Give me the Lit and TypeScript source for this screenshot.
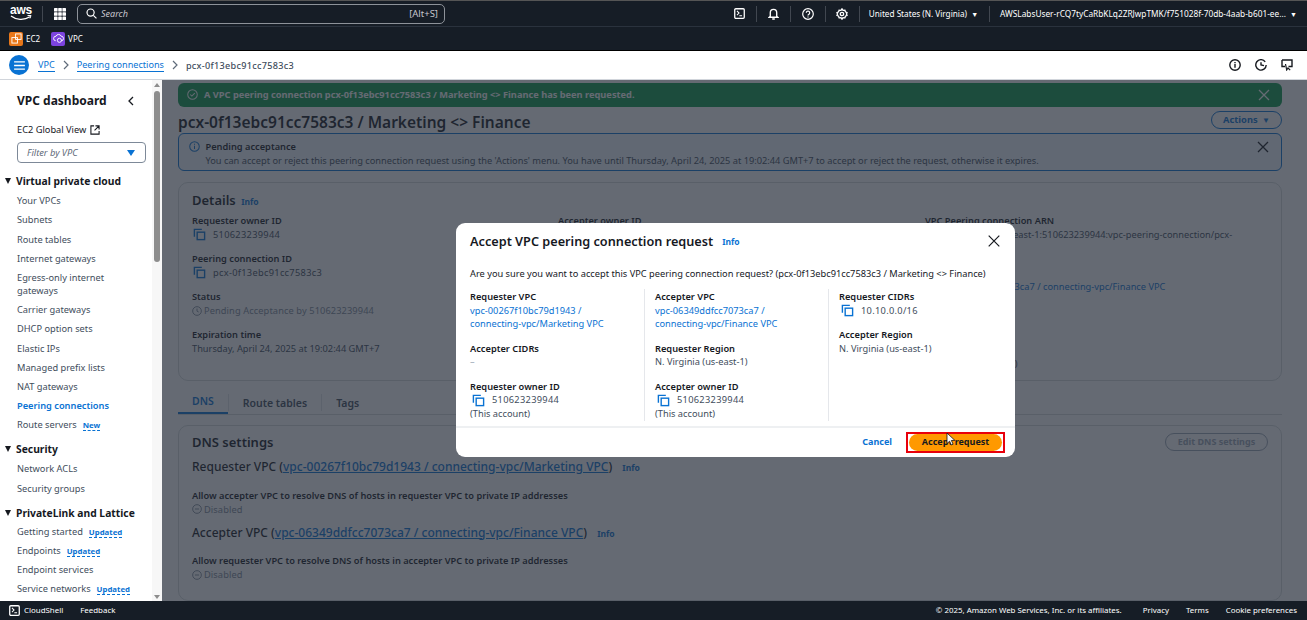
import { LitElement, css, html, svg } from "lit";
import { customElement } from "lit/decorators.js";

type NavItem = { label: string; badge?: string; active?: boolean };
type NavSection = { title: string; items: NavItem[] };

const NAV: NavSection[] = [
  {
    title: "Virtual private cloud",
    items: [
      { label: "Your VPCs" },
      { label: "Subnets" },
      { label: "Route tables" },
      { label: "Internet gateways" },
      { label: "Egress-only internet gateways" },
      { label: "Carrier gateways" },
      { label: "DHCP option sets" },
      { label: "Elastic IPs" },
      { label: "Managed prefix lists" },
      { label: "NAT gateways" },
      { label: "Peering connections", active: true },
      { label: "Route servers", badge: "New" },
    ],
  },
  { title: "Security", items: [{ label: "Network ACLs" }, { label: "Security groups" }] },
  {
    title: "PrivateLink and Lattice",
    items: [
      { label: "Getting started", badge: "Updated" },
      { label: "Endpoints", badge: "Updated" },
      { label: "Endpoint services" },
      { label: "Service networks", badge: "Updated" },
    ],
  },
];

const copyIcon = svg`<svg class="copy" viewBox="0 0 14 14" width="13" height="13" fill="none" stroke="currentColor" stroke-width="1.5"><path d="M9.5 1.5H1.5V9.5"/><rect x="4.5" y="4.5" width="8" height="8"/></svg>`;
const closeIcon = svg`<svg viewBox="0 0 12 12" width="12" height="12" fill="none" stroke="currentColor" stroke-width="1.3"><path d="M1 1l10 10M11 1L1 11"/></svg>`;
const terminalIcon = svg`<svg viewBox="0 0 12 12" width="11" height="11" fill="none" stroke="#fff" stroke-width="1.4"><rect x=".8" y=".8" width="10.4" height="10.4" rx="1.2"/><path d="M3.2 3.2l2.300 2.300-2.300 2.300M5.800 8.400H8.800" stroke-width="1.1"/></svg>`;

@customElement("app-root")
export class AppRoot extends LitElement {
  private topBar() {
    return html`
      <header class="topbar">
        <div class="aws">
          <span class="aws-word">aws</span>
          <svg viewBox="0 0 22 6" width="22" height="6" fill="none"><path d="M1 1c5 4 13 4.500 19 .8" stroke="#fff" stroke-width="1.3"/><path d="M17.500 .6l3.500-.2-1 3" stroke="#fff" stroke-width="1"/></svg>
        </div>
        <span class="sep aws-sep"></span>
        <svg class="grid" viewBox="0 0 12 12" width="12" height="12" fill="#fff">
          ${[0, 4.2, 8.4].map((y) =>
            [0, 4.2, 8.4].map((x) => svg`<rect x=${x} y=${y} width="3.600" height="3.600" rx=".6"/>`)
          )}
        </svg>
        <div class="search">
          <svg viewBox="0 0 12 12" width="11" height="11" fill="none" stroke="#fff" stroke-width="1.3"><circle cx="5" cy="5" r="3.900"/><path d="M8 8l3.400 3.400"/></svg>
          <span class="search-text">Search</span>
          <span class="search-key">[Alt+S]</span>
        </div>
        <div class="top-right">
          <span class="ti">${terminalIcon}</span>
          <span class="sep"></span>
          <span class="ti"><svg viewBox="0 0 12 13" width="11" height="12" fill="none" stroke="#fff" stroke-width="1.500"><path d="M2.500 9V5a3.500 3.500 0 0 1 7 0v4l1 1h-9zM4.600 12h2.800"/></svg></span>
          <span class="sep"></span>
          <span class="ti"><svg viewBox="0 0 12 12" width="12" height="12" fill="none" stroke="#fff" stroke-width="1.200"><circle cx="6" cy="6" r="5.300"/><path d="M4.300 4.700a1.700 1.700 0 1 1 2.600 1.500c-.6.400-.9.700-.9 1.300M6 8.400v1"/></svg></span>
          <span class="sep"></span>
          <span class="ti"><svg viewBox="0 0 12 12" width="12" height="12" fill="none" stroke="#fff" stroke-width="1.300"><path d="M6 .8l1 1.500 1.900-.2.500 1.700 1.700.9-.7 1.300.7 1.300-1.700.9-.5 1.700-1.900-.2-1 1.500-1-1.500-1.900.2-.5-1.700-1.700-.9.7-1.300-.7-1.300 1.700-.9.5-1.700 1.900.2z"/><circle cx="6" cy="6" r="1.700"/></svg></span>
          <span class="sep"></span>
          <span class="region">United States (N. Virginia) <i>▼</i></span>
          <span class="sep"></span>
          <span class="account">AWSLabsUser-rCQ7tyCaRbKLq2ZRJwpTMK/f751028f-70db-4aab-b601-ee... <i>▼</i></span>
        </div>
      </header>
      <div class="favbar">
        <span class="fav-icon ec2">
          <svg viewBox="0 0 12 12" width="11" height="11" fill="none" stroke="#fff" stroke-width="1"><rect x="1" y="5" width="6" height="6"/><rect x="5" y="1" width="6" height="6"/></svg>
        </span>
        <span class="fav-label">EC2</span>
        <span class="fav-icon vpc">
          <svg viewBox="0 0 12 12" width="11" height="11" fill="none" stroke="#fff" stroke-width="1"><path d="M3 8.500a2.500 2.500 0 0 1 .3-5 3 3 0 0 1 5.600 0 2.500 2.500 0 0 1 .1 5"/><circle cx="7" cy="8" r="2.200"/></svg>
        </span>
        <span class="fav-label">VPC</span>
      </div>
    `;
  }

  private crumbs() {
    return html`
      <div class="crumbs">
        <span class="menu-btn">
          <svg viewBox="0 0 12 10" width="11" height="9" stroke="#fff" stroke-width="1.400"><path d="M0 1h12M0 5h12M0 9h12"/></svg>
        </span>
        <a class="crumb first">VPC</a>
        ${this.chevron()}
        <a class="crumb">Peering connections</a>
        ${this.chevron()}
        <span class="crumb-now">pcx-0f13ebc91cc7583c3</span>
        <span class="crumb-tools">
          <svg viewBox="0 0 12 12" width="12" height="12" fill="none" stroke="#16191f" stroke-width="1.400"><circle cx="6" cy="6" r="5.200"/><path d="M6 5v3.800M6 3v1.200"/></svg>
          <svg viewBox="0 0 12 12" width="12" height="12" fill="none" stroke="#16191f" stroke-width="1.400"><path d="M10.200 2.800A5.200 5.200 0 1 0 11.200 6M6 3.200V6l3 .6"/></svg>
          <svg viewBox="0 0 12 12" width="12" height="12" fill="none" stroke="#16191f" stroke-width="1.400"><path d="M1 1h10v6.500H7.500M4 7.500H1V1"/><path d="M4.500 5l1.200 6 1.300-2 2.200 2.200" stroke-width="1.200"/></svg>
        </span>
      </div>
    `;
  }

  private chevron() {
    return html`<svg class="chev" viewBox="0 0 6 10" width="6" height="10" fill="none" stroke="#5f6b7a" stroke-width="1.200"><path d="M1 1l4 4-4 4"/></svg>`;
  }

  private sidebar() {
    return html`
      <aside class="side">
        <div class="side-inner">
          <div class="side-head">
            <span>VPC dashboard</span>
            <svg viewBox="0 0 6 10" width="6" height="10" fill="none" stroke="#16191f" stroke-width="1.300"><path d="M5 1L1 5l4 4"/></svg>
          </div>
          <div class="global">
            EC2 Global View
            <svg viewBox="0 0 11 11" width="10" height="10" fill="none" stroke="#16191f" stroke-width="1.200"><path d="M4.500 1H1v9h9V6.500M6 1h4v4M10 1L5 6"/></svg>
          </div>
          <div class="filter"><span>Filter by VPC</span><i></i></div>
          ${NAV.map(
            (s) => html`
              <div class="sec-title"><i></i>${s.title}</div>
              <ul>
                ${s.items.map(
                  (it) => html`<li class=${it.active ? "on" : ""}>
                    ${it.label}${it.badge ? html`<span class="badge">${it.badge}</span>` : ""}
                  </li>`
                )}
              </ul>
            `
          )}
        </div>
        <div class="scroll">
          <i class="up"></i>
          <b></b>
          <i class="down"></i>
        </div>
      </aside>
    `;
  }

  private field(label: string, value: unknown, copy = false) {
    return html`<div class="field">
      <div class="f-label">${label}</div>
      <div class="f-value">
        ${copy ? html`<span class="copy-wrap">${copyIcon}</span><span class="spaced-val">${value}</span>` : value}
      </div>
    </div>`;
  }

  private content() {
    return html`
      <section class="content">
        <div class="flash">
          <svg viewBox="0 0 12 12" width="11" height="11" fill="none" stroke="currentColor" stroke-width="1.100"><circle cx="6" cy="6" r="5.200"/><path d="M3.500 6l1.800 1.800 3.200-3.400"/></svg>
          <span>A VPC peering connection pcx-0f13ebc91cc7583c3 / Marketing &lt;&gt; Finance has been requested.</span>
          <span class="flash-x">${closeIcon}</span>
        </div>
        <div class="title-row">
          <h1>pcx-0f13ebc91cc7583c3 / Marketing &lt;&gt; Finance</h1>
          <span class="actions">Actions <i>▼</i></span>
        </div>
        <div class="alert">
          <svg viewBox="0 0 12 12" width="11" height="11" fill="none" stroke="#0972d3" stroke-width="1.100"><circle cx="6" cy="6" r="5.200"/><path d="M6 5.200v3.600M6 3v1.200"/></svg>
          <div class="alert-body">
            <strong>Pending acceptance</strong>
            <div>You can accept or reject this peering connection request using the 'Actions' menu. You have until Thursday, April 24, 2025 at 19:02:44 GMT+7 to accept or reject the request, otherwise it expires.</div>
          </div>
          <span class="alert-x">${closeIcon}</span>
        </div>
        <div class="card details">
          <h2>Details <a class="info">Info</a></h2>
          <div class="cols">
            <div>
              ${this.field("Requester owner ID", "510623239944", true)}
              ${this.field("Peering connection ID", "pcx-0f13ebc91cc7583c3", true)}
              ${this.field(
                "Status",
                html`<span class="muted"><svg viewBox="0 0 12 12" width="10" height="10" fill="none" stroke="currentColor" stroke-width="1.100"><circle cx="6" cy="6" r="5.200"/><path d="M6 3v3.200l2 1"/></svg> Pending Acceptance by 510623239944</span>`
              )}
              ${this.field("Expiration time", "Thursday, April 24, 2025 at 19:02:44 GMT+7")}
            </div>
            <div>
              <div class="field"><div class="f-label">Accepter owner ID</div></div>
            </div>
            <div>
              <div class="field arn">
                <div class="f-label">VPC Peering connection ARN</div>
                <div class="arn-value"><span class="arn-copy">${copyIcon}</span>arn:aws:ec2:us-east-1:510623239944:vpc-peering-connection/pcx-0f13ebc91cc7583c3</div>
              </div>
              <div class="field">
                <div class="f-label">&nbsp;</div>
                <div class="f-value"><a class="long-link">vpc-06349ddfcc7073ca7 / connecting-vpc/Finance VPC</a></div>
              </div>
              <div class="field region-field">
                <div class="f-label">Accepter Region</div>
                <div class="f-value">N. Virginia (us-east-1)</div>
              </div>
            </div>
          </div>
        </div>
        <div class="tabs">
          <span class="tab on">DNS</span>
          <span class="tab">Route tables</span>
          <span class="tab">Tags</span>
        </div>
        <div class="card dns">
          <div class="dns-head">
            <h2>DNS settings</h2>
            <span class="edit">Edit DNS settings</span>
          </div>
          <h3>Requester VPC (<a class="ul">vpc-00267f10bc79d1943 / connecting-vpc/Marketing VPC</a>) <a class="info">Info</a></h3>
          <div class="f-label spaced">Allow accepter VPC to resolve DNS of hosts in requester VPC to private IP addresses</div>
          <div class="muted dis">${this.minus()} Disabled</div>
          <h3>Accepter VPC (<a class="ul">vpc-06349ddfcc7073ca7 / connecting-vpc/Finance VPC</a>) <a class="info">Info</a></h3>
          <div class="f-label spaced">Allow requester VPC to resolve DNS of hosts in accepter VPC to private IP addresses</div>
          <div class="muted dis">${this.minus()} Disabled</div>
        </div>
      </section>
    `;
  }

  private minus() {
    return html`<svg viewBox="0 0 12 12" width="10" height="10" fill="none" stroke="currentColor" stroke-width="1.100"><circle cx="6" cy="6" r="5.200"/><path d="M3.500 6h5"/></svg>`;
  }

  private modal() {
    return html`
      <div class="modal">
        <div class="m-head">
          <h2>Accept VPC peering connection request</h2>
          <a class="info">Info</a>
          <span class="m-x"><svg viewBox="0 0 12 12" width="12" height="12" fill="none" stroke="#16191f" stroke-width="1.200"><path d="M.7.7l10.600 10.600M11.300.7L.7 11.300"/></svg></span>
        </div>
        <p class="m-q">Are you sure you want to accept this VPC peering connection request? (pcx-0f13ebc91cc7583c3 / Marketing &lt;&gt; Finance)</p>
        <div class="m-cols">
          <div class="m-col">
            ${this.mField("Requester VPC", html`<a>vpc-00267f10bc79d1943 /<br />connecting-vpc/Marketing VPC</a>`)}
            ${this.mField("Accepter CIDRs", html`<span class="dash">–</span>`)}
            ${this.mField("Requester owner ID", html`<span class="m-copy">${copyIcon}510623239944</span>(This account)`)}
          </div>
          <div class="m-col">
            ${this.mField("Accepter VPC", html`<a>vpc-06349ddfcc7073ca7 /<br />connecting-vpc/Finance VPC</a>`)}
            ${this.mField("Requester Region", "N. Virginia (us-east-1)")}
            ${this.mField("Accepter owner ID", html`<span class="m-copy">${copyIcon}510623239944</span>(This account)`)}
          </div>
          <div class="m-col">
            ${this.mField("Requester CIDRs", html`<span class="m-copy">${copyIcon}10.10.0.0/16</span>`)}
            ${this.mField("Accepter Region", "N. Virginia (us-east-1)")}
          </div>
        </div>
        <div class="m-foot">
          <span class="cancel">Cancel</span>
          <span class="highlight"><span class="accept">Accept request</span></span>
        </div>
        <svg class="cursor" viewBox="0 0 10 14" width="10" height="14"><path d="M1 1v10.500l2.600-2.300 1.700 3.800 1.800-.8-1.700-3.700 3.400-.2z" fill="#fff" stroke="#111" stroke-width=".8"/></svg>
      </div>
    `;
  }

  private mField(label: string, value: unknown) {
    return html`<div class="m-field"><div class="f-label">${label}</div><div class="m-val">${value}</div></div>`;
  }

  private footer() {
    return html`
      <footer class="foot">
        ${terminalIcon}
        <span class="shell">CloudShell</span>
        <span>Feedback</span>
        <span class="legal">© 2025, Amazon Web Services, Inc. or its affiliates.</span>
        <span>Privacy</span>
        <span>Terms</span>
        <span>Cookie preferences</span>
      </footer>
    `;
  }

  render() {
    return html`
      ${this.topBar()} ${this.crumbs()}
      <div class="main">
        ${this.sidebar()}
        <div class="stage">
          ${this.content()}
          <div class="dim"></div>
        </div>
        ${this.modal()}
      </div>
      ${this.footer()}
    `;
  }

  static styles = css`
    :host {
      display: flex;
      flex-direction: column;
      width: 1307px;
      height: 620px;
      overflow: hidden;
      font-family: "Noto Sans", "Open Sans", sans-serif;
      font-size: 9.250px;
      line-height: 13px;
      color: #16191f;
      background: #fff;
      position: relative;
    }
    svg {
      flex: none;
      display: block;
    }
    a {
      color: #0972d3;
    }
    i {
      font-style: normal;
    }
    ul {
      list-style: none;
      margin: 0;
      padding: 0;
    }

    /* top nav */
    .topbar {
      height: 27px;
      flex: none;
      box-sizing: border-box;
      display: flex;
      align-items: center;
      background: #161d26;
      color: #fff;
      border-top: 1px solid #555;
      border-bottom: 1px solid #2a323d;
      padding-left: 10px;
      font-size: 9px;
    }
    .aws {
      width: 22px;
      display: flex;
      flex-direction: column;
      align-items: center;
      margin-top: -1px;
    }
    .aws-word {
      font: bold 12px/10px "Liberation Sans", sans-serif;
      letter-spacing: -0.3px;
    }
    .sep {
      width: 1px;
      height: 16px;
      background: #414750;
      flex: none;
    }
    .aws-sep {
      margin-left: 10px;
    }
    .grid {
      margin-left: 11px;
    }
    .search {
      margin-left: 11px;
      width: 368px;
      height: 20px;
      box-sizing: border-box;
      border: 1px solid #8d9299;
      border-radius: 5px;
      display: flex;
      align-items: center;
      padding: 0 6px 0 8px;
      gap: 4px;
      color: #c6c6cd;
    }
    .search-text {
      font-style: italic;
      flex: 1;
    }
    .search-key {
      font-size: 9.500px;
    }
    .top-right {
      margin-left: auto;
      display: flex;
      align-items: center;
      padding-right: 10px;
    }
    .top-right .ti {
      width: 33.200px;
      display: flex;
      justify-content: center;
    }
    .region {
      padding: 0 11px 0 9px;
      font-size: 8.200px;
      white-space: nowrap;
    }
    .region i,
    .account i {
      font-size: 7px;
      margin-left: 2px;
    }
    .account {
      padding-left: 10px;
      font-size: 8.300px;
      white-space: nowrap;
    }
    .favbar {
      height: 24px;
      flex: none;
      box-sizing: border-box;
      background: #161d26;
      border-bottom: 1px solid #000;
      display: flex;
      align-items: center;
      padding-left: 9px;
      color: #fff;
      font-size: 8px;
    }
    .fav-icon {
      width: 14px;
      height: 14px;
      border-radius: 2px;
      display: flex;
      align-items: center;
      justify-content: center;
    }
    .fav-icon.ec2 {
      background: #e8771a;
    }
    .fav-icon.vpc {
      background: #7c43e0;
    }
    .fav-label {
      margin-left: 3px;
      margin-right: 11px;
    }

    /* breadcrumbs */
    .crumbs {
      height: 29px;
      flex: none;
      box-sizing: border-box;
      display: flex;
      align-items: center;
      padding: 0 14px 0 9px;
      background: #fff;
      border-bottom: 1px solid #d1d5db;
      font-size: 9.100px;
    }
    .menu-btn {
      width: 20px;
      height: 20px;
      border-radius: 50%;
      background: #0972d3;
      display: flex;
      align-items: center;
      justify-content: center;
    }
    .crumb {
      color: #0972d3;
      border-bottom: 1px solid #0972d3;
      line-height: 12px;
    }
    .crumb.first {
      margin-left: 9px;
    }
    .chev {
      margin: 0 8px 0 8px;
    }
    .crumb-now {
      color: #414d5c;
      letter-spacing: 0.3px;
      font-weight: 500;
    }
    .crumb-tools {
      margin-left: auto;
      display: flex;
      gap: 14px;
    }

    .main {
      flex: 1;
      min-height: 0;
      display: flex;
    }

    /* sidebar */
    .side {
      width: 162px;
      flex: none;
      display: flex;
      background: #fff;
      overflow: hidden;
    }
    .side-inner {
      flex: 1;
      min-width: 0;
      padding: 14px 5px 0 17px;
      color: #414d5c;
    }
    .side-head {
      display: flex;
      align-items: center;
      justify-content: space-between;
      font-size: 12px;
      font-weight: 700;
      line-height: 14px;
      color: #16191f;
      padding-right: 13px;
    }
    .global {
      margin-top: 15px;
      display: flex;
      align-items: center;
      gap: 4px;
      color: #16191f;
    }
    .filter {
      margin-top: 6px;
      width: 129px;
      height: 21px;
      box-sizing: border-box;
      border: 1px solid #7d8998;
      border-radius: 4px;
      display: flex;
      align-items: center;
      justify-content: space-between;
      padding: 0 10px 0 9px;
      font-style: italic;
      color: #5f6b7a;
    }
    .filter i {
      border: 4px solid transparent;
      border-top: 6px solid #0972d3;
      border-bottom: 0;
    }
    .sec-title {
      margin: 11px 0 1px -12px;
      height: 14px;
      line-height: 14px;
      display: flex;
      align-items: center;
      gap: 5px;
      font-size: 10.300px;
      font-weight: 700;
      color: #16191f;
    }
    .sec-title i {
      border: 3.500px solid transparent;
      border-top: 6px solid #16191f;
      border-bottom: 0;
    }
    .side li {
      margin-top: 6.200px;
    }
    .side ul:last-of-type li:first-child {
      margin-top: 5.200px;
    }
    .side li.on {
      color: #0972d3;
      font-weight: 600;
    }
    .badge {
      margin-left: 6px;
      color: #0972d3;
      font-size: 7.800px;
      font-weight: 700;
      border-bottom: 1px dashed #0972d3;
      line-height: 10px;
      display: inline-block;
      vertical-align: top;
      margin-top: 2px;
    }
    .scroll {
      width: 10px;
      flex: none;
      display: flex;
      flex-direction: column;
      align-items: center;
      padding-top: 3px;
      box-sizing: border-box;
      background: #f7f7f7;
    }
    .scroll b {
      width: 6px;
      height: 171px;
      border-radius: 3px;
      background: #8d8d8d;
      margin-top: 4px;
    }
    .scroll i {
      border: 3px solid transparent;
    }
    .scroll .up {
      border-bottom: 4px solid #8d8d8d;
      border-top: 0;
    }
    .scroll .down {
      margin-top: auto;
      margin-bottom: 2px;
      border-top: 4px solid #8d8d8d;
      border-bottom: 0;
    }

    /* dimmed page */
    .stage {
      flex: 1;
      min-width: 0;
      position: relative;
      overflow: hidden;
    }
    .dim {
      position: absolute;
      inset: 0;
      background: rgba(35, 43, 55, 0.7);
    }
    .content {
      padding: 3px 25px 0 16px;
    }
    .flash {
      height: 24px;
      box-sizing: border-box;
      background: #0a9a4a;
      border-radius: 6px;
      color: #fff;
      display: flex;
      align-items: center;
      gap: 6px;
      padding: 0 12px 1px 9px;
      font-weight: 700;
    }
    .flash-x {
      margin-left: auto;
    }
    .title-row {
      display: flex;
      align-items: center;
      justify-content: space-between;
      height: 26px;
    }
    h1 {
      margin: 4px 0 0;
      font-size: 15.500px;
      font-weight: 600;
      line-height: 20px;
    }
    .actions {
      width: 71px;
      height: 18px;
      box-sizing: border-box;
      border: 1.500px solid #0972d3;
      border-radius: 9px;
      color: #0972d3;
      font-weight: 700;
      font-size: 9.300px;
      text-align: center;
      line-height: 15px;
      margin-top: -1px;
    }
    .actions i {
      font-size: 8px;
      margin-left: 2px;
    }
    .alert {
      height: 38px;
      box-sizing: border-box;
      border: 1.500px solid #0972d3;
      border-radius: 6px;
      background: #f2f8fd;
      display: flex;
      gap: 5.500px;
      padding: 6px 12px 0 10px;
      color: #414d5c;
      line-height: 14px;
    }
    .alert svg {
      margin-top: 1px;
    }
    .alert strong {
      color: #16191f;
      font-weight: 600;
    }
    .alert-body {
      flex: 1;
    }
    .alert-x {
      color: #16191f;
    }
    .card {
      border: 1px solid #d5dbdb;
      border-radius: 10px;
      background: #fff;
      box-sizing: border-box;
      padding: 8px 13px;
    }
    .details {
      margin-top: 11px;
      height: 199px;
    }
    h2 {
      margin: 0;
      font-size: 13px;
      font-weight: 600;
      line-height: 18px;
    }
    .info {
      font-size: 8.500px;
      font-weight: 700;
      margin-left: 2px;
    }
    h3 .info {
      margin-left: 7px;
    }
    .cols {
      display: grid;
      grid-template-columns: 366px 367px 1fr;
      margin-top: 3px;
    }
    .field {
      margin-bottom: 11px;
    }
    .field.arn {
      margin-bottom: 12px;
    }
    .f-label {
      font-weight: 600;
      line-height: 13px;
      color: #16191f;
    }
    .f-value {
      line-height: 13px;
      margin-top: 1px;
      display: flex;
      align-items: flex-start;
      color: #414d5c;
    }
    .arn-value {
      margin-top: 1px;
      color: #414d5c;
      overflow-wrap: anywhere;
    }
    .arn-copy {
      display: inline-block;
      vertical-align: top;
      margin: 0 7px 0 1px;
    }
    .spaced-val {
      letter-spacing: 0.3px;
    }
    .long-link {
      margin-left: 6px;
    }
    .copy {
      color: #0972d3;
    }
    .copy-wrap {
      margin-right: 7px;
      margin-left: 1px;
    }
    .muted {
      color: #7d8998;
      display: inline-flex;
      align-items: center;
      gap: 2px;
      letter-spacing: 0.1px;
    }
    .region-field {
      margin-top: 50px;
    }
    .tabs {
      margin-top: 11px;
      height: 23px;
      display: flex;
      border-bottom: 1px solid #d5dbdb;
      box-sizing: border-box;
      font-size: 10.500px;
      font-weight: 600;
      color: #414d5c;
    }
    .tab {
      padding: 2px 14px 0;
      border-left: 1px solid #e1e4e8;
      height: 15px;
      line-height: 15px;
      margin-top: 2px;
    }
    .tab:first-child {
      border: 0;
    }
    .tab.on {
      color: #0972d3;
      height: 22px;
      box-sizing: border-box;
      margin-top: 0;
      padding-top: 1px;
      line-height: 17px;
      border-bottom: 2px solid #0972d3;
    }
    .dns {
      margin-top: 10px;
      height: 176px;
      padding-top: 7px;
    }
    .dns-head {
      display: flex;
      justify-content: space-between;
      align-items: center;
    }
    .edit {
      width: 103px;
      height: 18px;
      box-sizing: border-box;
      border: 1.500px solid #9ba7b6;
      border-radius: 9px;
      color: #9ba7b6;
      font-weight: 700;
      font-size: 9px;
      text-align: center;
      line-height: 15px;
    }
    h3 {
      margin: 8px 0 0;
      font-size: 12px;
      font-weight: 500;
      line-height: 16px;
    }
    h3 .ul {
      text-decoration: underline;
    }
    .spaced {
      margin-top: 12.500px;
    }
    .dis {
      margin: 1px 0 9px;
      display: flex;
    }

    /* modal */
    .modal {
      position: absolute;
      left: 456px;
      top: 223px;
      width: 559px;
      height: 234px;
      box-sizing: border-box;
      background: #fff;
      border-radius: 9px;
      display: flex;
      flex-direction: column;
    }
    .m-head {
      display: flex;
      align-items: center;
      gap: 7px;
      height: 18px;
      margin: 9px 15px 0 14px;
    }
    .m-head h2 {
      font-size: 12.700px;
    }
    .m-x {
      margin-left: auto;
    }
    .m-q {
      margin: 17px 14px 0;
      color: #16191f;
      line-height: 13px;
    }
    .m-cols {
      display: grid;
      grid-template-columns: 174px 173px 1fr;
      grid-auto-rows: 132px;
      margin: 9px 14px 0;
      gap: 0 11px;
    }
    .m-col + .m-col {
      position: relative;
    }
    .m-col {
      box-sizing: border-box;
      padding-top: 1px;
    }
    .m-col + .m-col::before {
      content: "";
      position: absolute;
      left: -11px;
      top: 0;
      bottom: 0;
      width: 1px;
      background: #e5e7eb;
    }
    .m-field {
      margin-bottom: 11.200px;
    }
    .m-field:last-child {
      margin-bottom: 0;
    }
    .m-val {
      margin-top: 0.500px;
      line-height: 13.500px;
      color: #414d5c;
    }
    .m-val a {
      color: #0972d3;
    }
    .dash {
      color: #9ba7b6;
    }
    .m-copy {
      display: flex;
      align-items: center;
      gap: 7px;
      margin-left: 2px;
      height: 13.500px;
      letter-spacing: 0.3px;
    }
    .m-foot {
      margin-top: auto;
      height: 31px;
      box-sizing: border-box;
      border-top: 2px solid #eef0f2;
      display: flex;
      align-items: center;
      justify-content: flex-end;
      gap: 14px;
      padding: 0 10px 0 0;
      font-weight: 700;
      font-size: 9px;
    }
    .cancel {
      color: #0972d3;
      margin-top: -2px;
    }
    .highlight {
      border: 2px solid #e8000b;
      padding: 0 1px;
      height: 21px;
      box-sizing: border-box;
      display: flex;
      align-items: center;
    }
    .accept {
      width: 93px;
      height: 17px;
      border-radius: 9px;
      background: #ff9900;
      color: #16191f;
      text-align: center;
      line-height: 15px;
    }
    .cursor {
      position: absolute;
      left: 490px;
      top: 209px;
    }

    /* footer */
    .foot {
      height: 19px;
      flex: none;
      box-sizing: border-box;
      background: #161d26;
      color: #fff;
      display: flex;
      align-items: center;
      font-size: 7.900px;
      padding: 0 10px 0 9px;
      gap: 17px;
    }
    .shell {
      margin-left: -13px;
    }
    .legal {
      margin-left: auto;
      margin-right: 4px;
    }
  `;
}

declare global {
  interface HTMLElementTagNameMap {
    "app-root": AppRoot;
  }
}
